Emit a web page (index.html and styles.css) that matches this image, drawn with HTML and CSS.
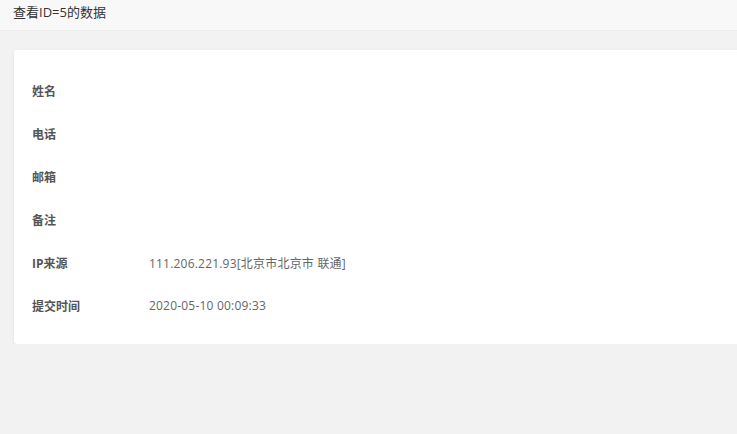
FILE: index.html
```html
<!DOCTYPE html>
<html lang="zh-CN">
<head>
<meta charset="utf-8">
<title>查看数据</title>
<link rel="stylesheet" href="styles.css">
</head>
<body>
<div class="header">查看ID=5的数据</div>
<div class="main">
  <div class="card">
    <table class="info">
      <tr><th>姓名</th><td></td></tr>
      <tr><th>电话</th><td></td></tr>
      <tr><th>邮箱</th><td></td></tr>
      <tr><th>备注</th><td></td></tr>
      <tr><th>IP来源</th><td>111.206.221.93[北京市北京市 联通]</td></tr>
      <tr><th>提交时间</th><td>2020-05-10 00:09:33</td></tr>
    </table>
  </div>
</div>
</body>
</html>
```
FILE: styles.css
```css
html, body {
  margin: 0;
  padding: 0;
  overflow: hidden;
  background: #f2f2f2;
  font-family: "Open Sans", "Noto Sans CJK SC", sans-serif;
  color: #666;
}
.header {
  height: 31px;
  line-height: 24px;
  padding-left: 13px;
  font-size: 13px;
  color: #333;
  background: #f8f8f8;
  border-bottom: 1px solid #ececec;
  box-sizing: border-box;
}
.main {
  padding: 19px 0 0 14px;
  width: 780px;
}
.card {
  background: #fff;
  border-radius: 3px;
  box-shadow: 0 1px 3px rgba(0,0,0,0.1);
  padding: 19px 18px 16px;
  height: 259px;
}
.info {
  border-collapse: collapse;
}
.info th {
  width: 117px;
  text-align: left;
  font-weight: bold;
  font-size: 12px;
  color: #555;
  height: 43px;
  padding: 0;
}
.info td {
  font-size: 12px;
  color: #666;
  padding: 0;
  height: 43px;
  letter-spacing: 0.2px;
}
```
